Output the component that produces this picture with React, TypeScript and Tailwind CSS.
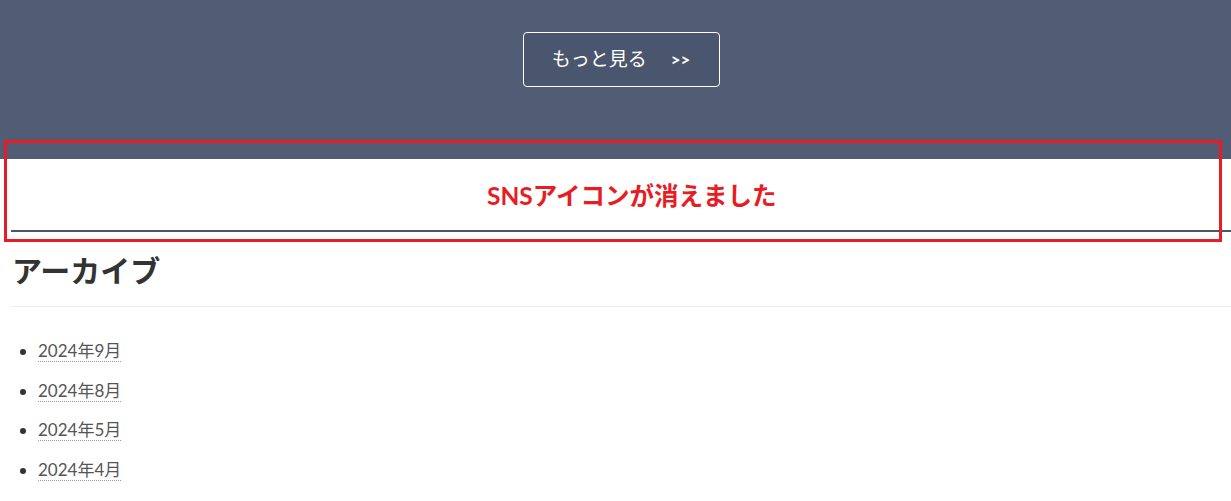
const archives = ["2024年9月", "2024年8月", "2024年5月", "2024年4月"];

export default function App() {
  return (
    <div
      className="relative min-h-[501px] bg-white"
      style={{ fontFamily: "Lato, 'Noto Sans CJK JP', sans-serif" }}
    >
      {/* more button band */}
      <div className="flex h-[159px] justify-center bg-[#515d75] pl-[11px] pt-[32px]">
        <a className="flex h-[55px] w-[197px] items-center justify-center rounded-[4px] border border-white bg-[#4a566d] text-[19px] text-white">
          <span>もっと見る</span>
          <span className="ml-[24px] text-[17px] font-bold">&gt;&gt;</span>
        </a>
      </div>

      <div className="pl-[11px]">
        {/* sns area (empty) */}
        <div className="h-[73px] border-b-2 border-[#4d5669]" />

        <div className="flex h-[75px] items-center border-b border-[#eeeeee] pl-[1px] pt-[3px]">
          <h2 className="text-[30px] font-bold text-[#333333]">アーカイブ</h2>
        </div>

        <ul className="mt-[24px] list-disc pl-[27px] text-[#555555]">
          {archives.map((a) => (
            <li key={a} className="text-[17px] leading-[39.5px] marker:text-[#333333]">
              <a className="border-b border-dotted border-[#999999]">{a}</a>
            </li>
          ))}
        </ul>
      </div>

      {/* annotation */}
      <div className="absolute left-[4px] top-[140px] h-[102px] w-[1218px] border-[3px] border-[#e81c24]">
        <span className="absolute left-[480px] top-[37px] whitespace-nowrap text-[24.5px] font-bold leading-[32px] text-[#e81c24]">
          SNSアイコンが消えました
        </span>
      </div>
    </div>
  );
}
